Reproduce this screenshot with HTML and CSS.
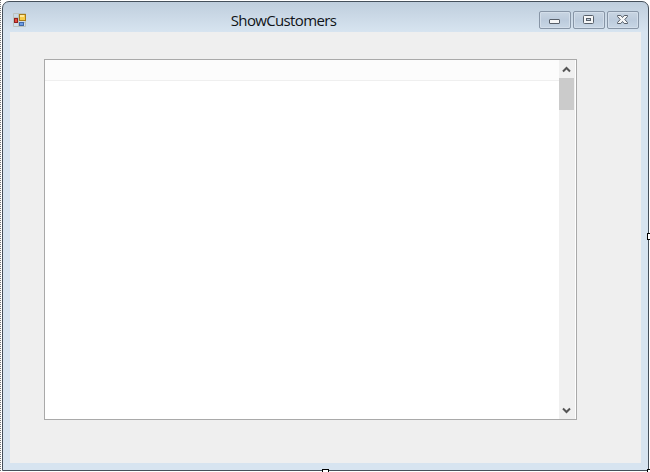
FILE: index.html
```
<!DOCTYPE html>
<html lang="en">
<head>
<meta charset="utf-8">
<title>ShowCustomers</title>
<link rel="stylesheet" href="styles.css">
</head>
<body>
<div class="designer">
  <main class="window">
    <header class="titlebar">
      <svg class="app-icon" width="14" height="14" viewBox="0 0 14 14">
        <path d="M.5 .5h12v13h-12zM.5 4.500h5M5.500 .5v13M5.500 9.500h7" fill="none" stroke="#bcc3bd"/>
        <rect x="6.500" y="1.500" width="6" height="6" fill="#f7cc48" stroke="#a87b18"/>
        <path d="M7 2h4v2H7z" fill="#ffe99a"/>
        <rect x="1.500" y="5.500" width="3" height="4" fill="#e44b3c" stroke="#8f2020"/>
        <rect x="6.500" y="9.500" width="4" height="3" fill="#6d9ce3" stroke="#4269a8"/>
      </svg>
      <h1 class="title">ShowCustomers</h1>
      <div class="controls">
        <span class="control"><svg width="32" height="18" viewBox="0 0 32 18"><rect x="10.500" y="8.500" width="10" height="4" rx=".5" fill="#f5f6f7" stroke="#575f69"/></svg></span>
        <span class="control"><svg width="32" height="18" viewBox="0 0 32 18"><rect x="10.500" y="4.500" width="10" height="8" rx="1" fill="#f5f6f7" stroke="#575f69"/><rect x="13.500" y="7.500" width="4" height="2" fill="#c3d0de" stroke="#575f69"/></svg></span>
        <span class="control"><svg width="32" height="18" viewBox="0 0 32 18"><path d="M10.500 4.500h3.300l1.700 2 1.700-2h3.300v1L17.800 8.500l2.700 3v1h-3.300l-1.700-2-1.700 2h-3.300v-1l2.700-3-2.700-3z" fill="#f5f6f7" stroke="#575f69"/></svg></span>
      </div>
    </header>
    <section class="form">
      <div class="data-grid">
        <div class="grid-body"><div class="column-header"></div></div>
        <div class="scrollbar">
          <svg class="arrow" width="15" height="18" viewBox="0 0 15 18"><path d="M4 11.500L7.500 8l3.500 3.500" fill="none" stroke="#555" stroke-width="2"/></svg>
          <div class="thumb"></div>
          <svg class="arrow down" width="15" height="18" viewBox="0 0 15 18"><path d="M4 7.500L7.500 11 11 7.500" fill="none" stroke="#555" stroke-width="2"/></svg>
        </div>
      </div>
    </section>
  </main>
  <i class="handle right"></i>
  <i class="handle bottom"></i>
  <i class="handle corner"></i>
</div>
</body>
</html>
```
FILE: styles.css
```
* { box-sizing: border-box; }
body { margin: 0; background: #fff; }
.designer {
  position: relative;
  width: 650px;
  height: 472px;
  padding: 1px 1px 1px 2px;
  overflow: hidden;
  background: repeating-linear-gradient(to bottom, #777 0 1px, #fff 1px 2px) 0 0 / 1px 100% no-repeat;
}
.window {
  width: 647px;
  height: 470px;
  padding: 0 7px;
  border: 1px solid #45505b;
  border-radius: 7px 7px 0 0;
  background: linear-gradient(#bfcedd 0, #d7e4f0 30px, #d7e4f0 100%);
}
.titlebar {
  display: flex;
  align-items: flex-start;
  height: 30px;
}
.app-icon { margin: 11px 0 0 3px; flex: none; }
.title {
  flex: 1;
  margin: 8px 6px 0 7px;
  text-align: center;
  font: 15px/20px "Open Sans", "Noto Sans", sans-serif;
  letter-spacing: -0.65px;
  color: #101418;
}
.controls { display: flex; gap: 2px; margin: 9px 2px 0 0; }
.control {
  width: 32px;
  height: 18px;
  border: 1px solid #8795a6;
  border-radius: 2px;
  background: linear-gradient(#c8d5e2, #bccbdc 50%, #c8d6e5);
  box-shadow: inset 0 0 0 1px #d3deea;
}
.control svg { display: block; margin: -1px; }
.form {
  width: 631px;
  height: 431px;
  padding: 27px 0 0 34px;
  background: #efefef;
}
.data-grid {
  display: flex;
  width: 533px;
  height: 361px;
  border: 1px solid #a9a9a9;
  background: #fff;
}
.grid-body { flex: 1; }
.column-header { height: 21px; background: #fcfcfc; border-bottom: 1px solid #efefef; }
.scrollbar {
  display: flex;
  flex-direction: column;
  width: 16px;
  margin-right: 1px;
  background: #f0f0f0;
}
.arrow { display: block; flex: none; }
.thumb { width: 15px; height: 32px; background: #cbcbcb; }
.down { margin-top: auto; }
.handle { position: absolute; width: 7px; height: 7px; border: 1px solid #000; background: #fff; }
.right { left: 647px; top: 233px; }
.bottom { left: 322px; top: 469px; }
.corner { left: 647px; top: 469px; }
```
